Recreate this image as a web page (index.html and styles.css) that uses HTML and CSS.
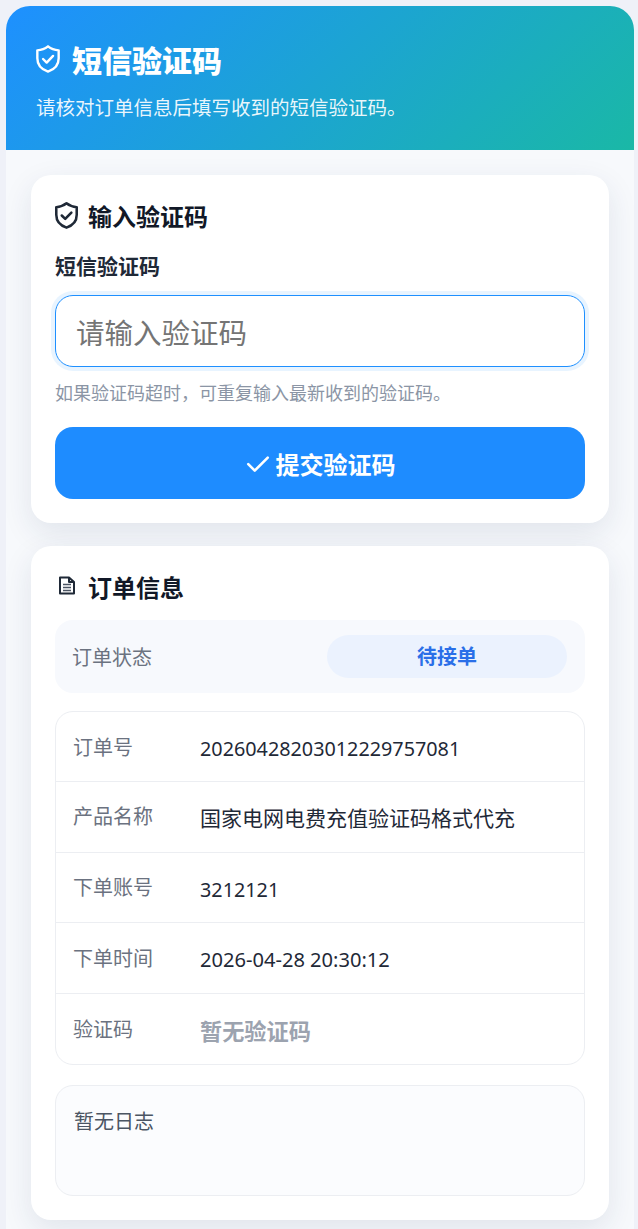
FILE: index.html
```html
<!DOCTYPE html>
<html lang="zh-CN">
  <head>
    <meta charset="UTF-8" />
    <meta name="viewport" content="width=device-width, initial-scale=1.0" />
    <title>短信验证码</title>
    <link rel="stylesheet" href="styles.css">
  </head>
  <body>
    <div class="page">
      <!-- Top banner -->
      <header class="hero">
        <h1 class="hero-title">
          <svg class="hero-icon" viewBox="3 1.500 18 21"><path d="M12 2.500C14.500 4.500 17 5.300 20 5.500V11.500C20 16.500 16.600 20 12 21.500C7.400 20 4 16.500 4 11.500V5.500C7 5.300 9.500 4.500 12 2.500Z" /><path d="M8.300 12l2.700 2.700 4.800-5" /></svg>
          短信验证码
        </h1>
        <p class="hero-sub">请核对订单信息后填写收到的短信验证码。</p>
      </header>

      <main class="main">
        <!-- Code form -->
        <section class="card">
          <h2 class="card-title">
            <svg class="card-icon" viewBox="3 1.500 18 21"><path d="M12 2.500C14.500 4.500 17 5.300 20 5.500V11.500C20 16.500 16.600 20 12 21.500C7.400 20 4 16.500 4 11.500V5.500C7 5.300 9.500 4.500 12 2.500Z" /><path d="M8.300 12l2.700 2.700 4.800-5" /></svg>
            输入验证码
          </h2>
          <label class="field-label" for="codeInput">短信验证码</label>
          <input class="code-input" id="codeInput" type="text" placeholder="请输入验证码" />
          <p class="hint">如果验证码超时，可重复输入最新收到的验证码。</p>
          <button class="submit" type="button">
            <svg class="submit-icon" viewBox="0 0 24 24"><path d="M3 13l6 6L21 7" /></svg>
            提交验证码
          </button>
        </section>

        <!-- Order details -->
        <section class="card">
          <h2 class="card-title">
            <svg class="doc-icon" viewBox="0 0 23 23"><path d="M5 3.400H14L19 8V19.600H5Z" /><path d="M14 3.400V8H19" /><path class="doc-lines" d="M8 10.500H16M8 13.500H16M8 16.500H16" /></svg>
            订单信息
          </h2>
          <div class="status-row">
            <span class="status-label">订单状态</span>
            <span class="status-pill">待接单</span>
          </div>
          <div class="info-table">
            <div class="info-row"><span class="info-key">订单号</span><span class="info-value num">20260428203012229757081</span></div>
            <div class="info-row"><span class="info-key first-key">产品名称</span><span class="info-value">国家电网电费充值验证码格式代充</span></div>
            <div class="info-row"><span class="info-key">下单账号</span><span class="info-value num">3212121</span></div>
            <div class="info-row"><span class="info-key">下单时间</span><span class="info-value num date">2026-04-28 20:30:12</span></div>
            <div class="info-row"><span class="info-key">验证码</span><span class="info-value empty">暂无验证码</span></div>
          </div>
          <div class="log-box">暂无日志</div>
        </section>
      </main>
    </div>
  </body>
</html>
```

FILE: styles.css
```css
* {
  box-sizing: border-box;
}

body {
  margin: 0;
  padding: 6px 4px 0 6px;
  background-color: #eff1f8;
  font-family: "Noto Sans", "Noto Sans CJK SC", sans-serif;
  color: #1f2937;
}

.page {
  border-radius: 24px 24px 0 0;
  overflow: hidden;
  background-color: #f7f9fc;
}

.hero {
  height: 144px;
  padding: 34px 30px 0 30px;
  background: linear-gradient(135deg, #1e90ff, #1ab8a6);
  color: white;
}

.hero-title {
  display: flex;
  align-items: center;
  gap: 12px;
  margin: 0;
  font-size: 30px;
  line-height: 42px;
  font-weight: 900;
}

.hero-icon {
  width: 24px;
  height: 28px;
  margin-top: -4px;
  fill: none;
  stroke: white;
  stroke-width: 1.800;
  stroke-linejoin: round;
  stroke-linecap: round;
}

.hero-sub {
  margin: 12px 0 0;
  font-size: 19.500px;
  line-height: 28px;
  color: rgba(255, 255, 255, 0.92);
}

.main {
  display: flex;
  flex-direction: column;
  gap: 23px;
  padding: 25px 25px 9px;
}

.card {
  padding: 24px;
  background-color: white;
  border-radius: 20px;
  box-shadow: 0 10px 30px rgba(30, 50, 90, 0.1);
}

.card-title {
  display: flex;
  align-items: center;
  gap: 10px;
  margin: 0;
  font-size: 24px;
  line-height: 36px;
  font-weight: 700;
  color: #111827;
}

.card-icon {
  width: 23px;
  height: 27px;
  margin-top: -4px;
  fill: none;
  stroke: #1f2937;
  stroke-width: 2;
  stroke-linejoin: round;
  stroke-linecap: round;
}

.doc-icon {
  width: 23px;
  height: 23px;
  margin-top: -5px;
  fill: none;
  stroke: #1f2937;
  stroke-width: 2;
  stroke-linejoin: round;
}

.doc-lines {
  stroke: #4b5563;
  stroke-width: 1.300;
}

.field-label {
  display: block;
  margin-top: 15px;
  font-size: 21px;
  line-height: 32px;
  font-weight: 700;
  color: #1f2937;
}

.code-input {
  display: block;
  width: 100%;
  height: 72px;
  margin-top: 13px;
  padding: 4px 20px 0;
  border: 1px solid #1e90ff;
  border-radius: 18px;
  box-shadow: 0 0 0 4px rgba(30, 144, 255, 0.1);
  font-family: inherit;
  font-size: 28.500px;
  outline: none;
}

.code-input::placeholder {
  color: #757575;
}

.hint {
  margin: 12px 0 0;
  font-size: 18px;
  line-height: 28px;
  color: #8b95a5;
}

.submit {
  display: flex;
  align-items: center;
  justify-content: center;
  gap: 5px;
  width: 100%;
  height: 72px;
  margin-top: 20px;
  padding: 0;
  border: none;
  border-radius: 18px;
  background-color: #1e8cff;
  color: white;
  font-family: inherit;
  font-size: 24px;
  font-weight: 700;
}

.submit-icon {
  width: 26px;
  height: 26px;
  fill: none;
  stroke: white;
  stroke-width: 2.400;
  stroke-linecap: round;
  stroke-linejoin: round;
}

.status-row {
  display: flex;
  align-items: center;
  justify-content: space-between;
  height: 73px;
  margin-top: 14px;
  padding: 0 18px 0 17px;
  border-radius: 18px;
  background-color: #f7f9fd;
}

.status-label {
  font-size: 20px;
  color: #6b7280;
}

.status-pill {
  width: 240px;
  height: 43px;
  border-radius: 22px;
  background-color: #ebf2fe;
  color: #2a6fe8;
  font-size: 20px;
  line-height: 43px;
  font-weight: 700;
  text-align: center;
}

.info-table {
  margin-top: 18px;
  border: 1px solid #eceef2;
  border-radius: 18px;
  overflow: hidden;
}

.info-row {
  display: flex;
  align-items: center;
  height: 70.400px;
  padding: 0 18px 0 17px;
  border-bottom: 1px solid #eceef2;
}

.info-row:last-child {
  border-bottom: none;
}

.info-key {
  width: 127px;
  margin-top: -1px;
  font-size: 20px;
  color: #6b7280;
}

.info-key.first-key {
  margin-top: -3px;
}

.info-value {
  font-size: 21px;
  color: #1f2937;
}

.info-value.num {
  margin-top: 4px;
  font-size: 19.800px;
}

.info-value.date {
  font-size: 20.100px;
}

.info-value.empty {
  margin-top: 4px;
  font-size: 22.200px;
  font-weight: 700;
  color: #9ca3af;
}

.log-box {
  height: 111px;
  margin-top: 20px;
  padding: 21px 18px;
  border: 1px solid #eceef2;
  border-radius: 18px;
  background-color: #fbfcfe;
  font-size: 20px;
  line-height: 30px;
  color: #4b5563;
}
```
